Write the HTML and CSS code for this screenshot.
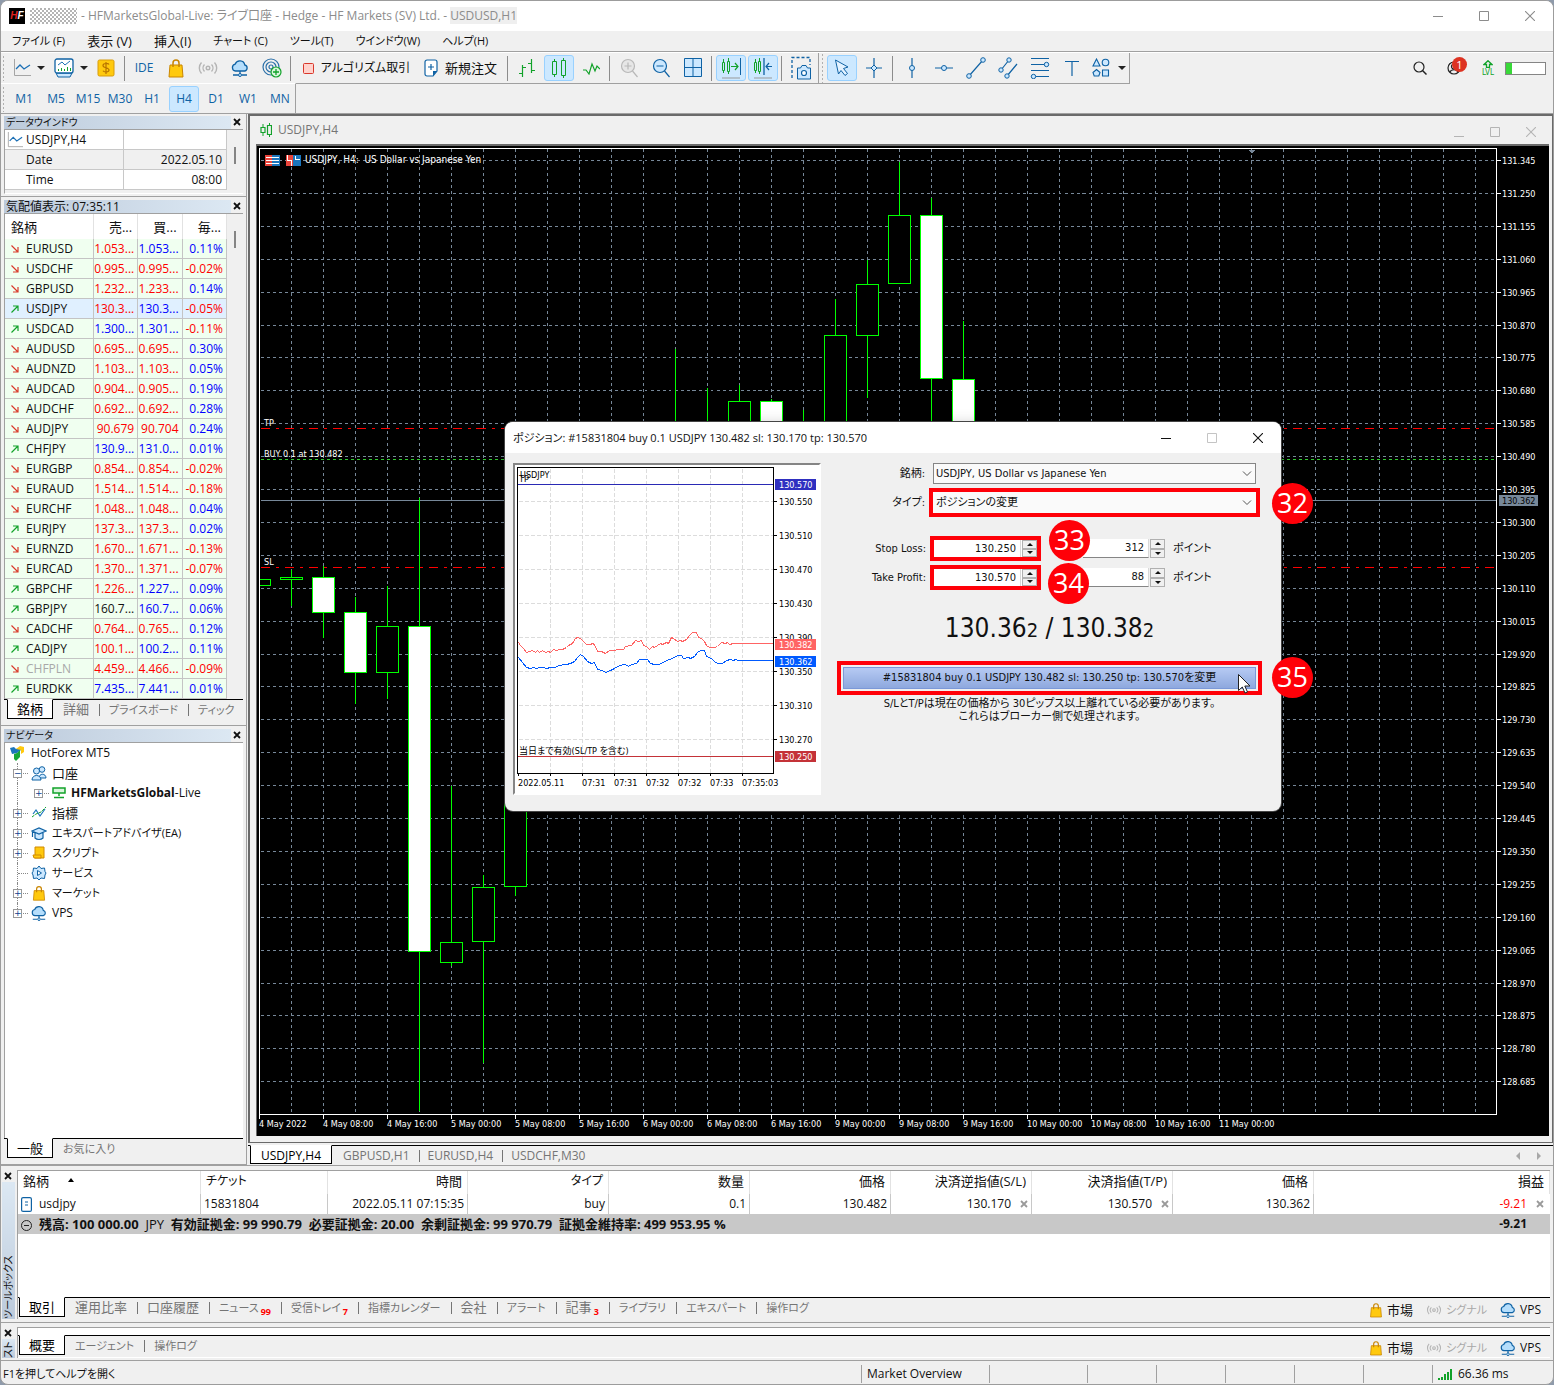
FILE: index.html
```html
<!DOCTYPE html>
<html lang="ja">
<head>
<meta charset="utf-8">
<title>HFMarketsGlobal-Live: ライブ口座 - Hedge</title>
<link rel="stylesheet" href="styles.css">
</head>
<body>
<svg class="defs" aria-hidden="true">
  <symbol id="i-bag" viewBox="0 0 18 20"><path d="M3 7h12l1 12H2z" fill="#ffc90e" stroke="#c98500"/><path d="M6 9V5a3 3 0 0 1 6 0v4" fill="none" stroke="#c98500" stroke-width="1.5"/></symbol>
  <symbol id="i-signal" viewBox="0 0 20 16"><g fill="none" stroke="#b4b4b4" stroke-width="1.4"><circle cx="10" cy="8" r="1.8"/><path d="M6.500 4.500a5 5 0 0 0 0 7M13.500 4.500a5 5 0 0 1 0 7M3.500 2.500a8 8 0 0 0 0 11M16.500 2.500a8 8 0 0 1 0 11"/></g></symbol>
  <symbol id="i-cloud" viewBox="0 0 18 18"><path d="M4.500 12a3.500 3.500 0 0 1-.3-6.900A5 5 0 0 1 13.800 6a3.100 3.100 0 0 1 0 6z" fill="#b5defc" stroke="#0f62a4" stroke-width="1.300"/><path d="M9 12v3M2 16h5M11 16h5" stroke="#0f62a4" stroke-width="1.300"/><circle cx="9" cy="16" r="1.500" fill="#cce8ff" stroke="#0f62a4"/></symbol>
  <symbol id="i-x" viewBox="0 0 8 8"><path d="M1 1l6 6M7 1L1 7" stroke="currentColor" stroke-width="1.800"/></symbol>
  <symbol id="i-dn" viewBox="0 0 8 8"><path d="M.5.500l6.500 6.500M7 2v5H2" fill="none" stroke="#d93a2b" stroke-width="1.200"/></symbol>
  <symbol id="i-up" viewBox="0 0 8 8"><path d="M.5 7.500L7 1M2 1h5v5" fill="none" stroke="#12a22a" stroke-width="1.200"/></symbol>
  <symbol id="i-line" viewBox="0 0 18 18"><path d="M1.500 0v16.500H18" fill="none" stroke="#a5a5a5"/><path d="M3 10l4-4 4 4 6-4" fill="none" stroke="#1b6fb5" stroke-width="1.300"/></symbol>
  <symbol id="i-caret" viewBox="0 0 8 4"><path d="M0 0h8L4 4z" fill="#222"/></symbol>
  <symbol id="i-min" viewBox="0 0 10 10"><path d="M0 5.500h10" stroke="currentColor"/></symbol>
  <symbol id="i-max" viewBox="0 0 10 10"><path d="M.5.500h9v9h-9z" fill="none" stroke="currentColor"/></symbol>
  <symbol id="i-close" viewBox="0 0 10 10"><path d="M0 0l10 10M10 0L0 10" stroke="currentColor" stroke-width="1.100"/></symbol>
</svg>
<div class="app">
  <header class="titlebar">
    <span class="logo"><span class="logo-h">H</span>F</span>
    <span class="masked"></span>
    <h1>- HFMarketsGlobal-Live: ライブ口座 - Hedge - HF Markets (SV) Ltd. - <span class="smudge">USDUSD,H1</span></h1>
    <div class="winbtns">
      <button aria-label="最小化"><svg width="10" height="10"><use href="#i-min"/></svg></button>
      <button aria-label="最大化"><svg width="10" height="10"><use href="#i-max"/></svg></button>
      <button aria-label="閉じる"><svg width="10" height="10"><use href="#i-close"/></svg></button>
    </div>
  </header>
  <nav class="menu">
    <button>ファイル (F)</button><button class="kanji">表示 (V)</button><button class="kanji">挿入(I)</button><button>チャート (C)</button><button>ツール(T)</button><button>ウインドウ(W)</button><button>ヘルプ(H)</button>
  </nav>
  <div class="bar-row">
    <div class="toolbar">
      <span class="grip"></span>
      <button class="wide drop" aria-label="チャート"><svg width="18" height="18"><use href="#i-line"/></svg><svg width="8" height="4"><use href="#i-caret"/></svg></button>
      <button class="wide drop" aria-label="インディケータ"><svg width="20" height="20" viewBox="0 0 20 20"><path d="M2 15h16l-2 4H4z" fill="#cce8ff" stroke="#0f62a4"/><rect x="1" y="1" width="18" height="14" rx="2" fill="#fff" stroke="#0f62a4" stroke-width="1.300"/><path d="M4 7l4-3 3 3 5-4" fill="none" stroke="#1b6fb5"/><path d="M4.500 13v-2M7.500 13v-3M10.500 13v-2M13.500 13V9M16.500 13v-3" stroke="#12a22a"/></svg><svg width="8" height="4"><use href="#i-caret"/></svg></button>
      <button aria-label="入出金"><svg width="18" height="18" viewBox="0 0 18 18"><rect x="1" y="1" width="16" height="16" rx="1.500" fill="#ffc90e" stroke="#d79b0b"/><path d="M12 5.500c-1-1.500-6-1.500-6 1 0 3 6 1.500 6 4.500 0 2.500-5 2.500-6 .8M9 3v12" fill="none" stroke="#b87400" stroke-width="1.200"/></svg></button>
      <span class="sep"></span>
      <button class="blue">IDE</button>
      <button aria-label="市場"><svg width="18" height="20"><use href="#i-bag"/></svg></button>
      <button aria-label="シグナル"><svg width="20" height="16"><use href="#i-signal"/></svg></button>
      <button aria-label="VPS"><svg width="18" height="18"><use href="#i-cloud"/></svg></button>
      <button aria-label="サービス"><svg width="20" height="20" viewBox="0 0 20 20"><g fill="none" stroke="#2a6fa8" stroke-width="1.200"><circle cx="9" cy="9" r="8"/><circle cx="9" cy="9" r="5"/><circle cx="9" cy="9" r="2"/></g><circle cx="14" cy="14" r="5" fill="#d9f5dc" stroke="#12a22a" stroke-width="1.200"/><path d="M11 14h6M14 11v6" stroke="#12a22a" stroke-width="1.300"/></svg></button>
      <span class="sep"></span>
      <button class="algo"><svg width="11" height="11" viewBox="0 0 11 11"><rect x=".5" y=".5" width="10" height="10" rx="1" fill="#ffd2cc" stroke="#d9372b"/></svg>アルゴリズム取引</button>
      <button class="order"><svg width="14" height="18" viewBox="0 0 14 18"><path d="M1 3a2 2 0 0 1 2-2h8a2 2 0 0 1 2 2v9l-4 5H3a2 2 0 0 1-2-2z" fill="#fff" stroke="#0f62a4" stroke-width="1.200"/><path d="M13 12H9v5z" fill="#0f62a4"/><path d="M4 8h6M7 5v6" stroke="#0f62a4" stroke-width="1.200"/></svg><span class="kanji">新規注文</span></button>
      <span class="sep"></span>
      <button aria-label="バー"><svg width="18" height="18" viewBox="0 0 18 18"><path d="M4.500 6v12M1 14.500h3M5 8.500h3M13.500 0v14M10 4.500h3M14 11.500h3" stroke="#12a22a" stroke-width="1.200"/></svg></button>
      <button class="on" aria-label="ローソク足"><svg width="16" height="20" viewBox="0 0 16 20"><path d="M3.500 1v18M12.500 0v20" stroke="#12a22a"/><path d="M1.500 3.500h4v13h-4zM10.500 2.500h4v15h-4z" fill="#cce8ff" stroke="#12a22a"/></svg></button>
      <button aria-label="ライン"><svg width="18" height="14" viewBox="0 0 18 14"><path d="M1 9h3l3 4 3-10 3 7 2-5 3 3" fill="none" stroke="#12a22a" stroke-width="1.200"/></svg></button>
      <span class="sep"></span>
      <button aria-label="ズームイン"><svg width="18" height="20" viewBox="0 0 18 20"><circle cx="8" cy="8" r="6.500" fill="#e6e6e6" stroke="#b8b8b8" stroke-width="1.200"/><path d="M4.500 8h7M8 4.500v7M12.500 13l5 6" stroke="#b8b8b8" stroke-width="1.200"/></svg></button>
      <button aria-label="ズームアウト"><svg width="18" height="20" viewBox="0 0 18 20"><circle cx="8" cy="8" r="6.500" fill="#cce8ff" stroke="#0f62a4" stroke-width="1.200"/><path d="M4.500 8h7M12.500 13l5 6" stroke="#0f62a4" stroke-width="1.200"/></svg></button>
      <button aria-label="整列"><svg width="18" height="20" viewBox="0 0 18 20"><path d="M.5.500h17v18H.5zM9 .5v18M.5 9.500h17" fill="#cce8ff" stroke="#0f62a4"/></svg></button>
      <span class="sep"></span>
      <button class="on" aria-label="自動スクロール"><svg width="20" height="22" viewBox="0 0 20 22"><path d="M2.500 2v14M7.500 1v16" stroke="#12a22a"/><path d="M1.500 5.500h2v8h-2zM6.500 4.500h2v10h-2z" fill="#cce8ff" stroke="#12a22a"/><path d="M10 9.500h7M14 6l3 3.500-3 3.500" fill="none" stroke="#12a22a" stroke-width="1.200"/><path d="M19.500 1v17" stroke="#0f62a4"/><path d="M1 21h18" stroke="#999"/></svg></button>
      <button class="on" aria-label="チャートシフト"><svg width="20" height="22" viewBox="0 0 20 22"><path d="M2.500 2v14M6.500 1v16" stroke="#12a22a"/><path d="M1.500 5.500h2v8h-2zM5.500 4.500h2v10h-2z" fill="#cce8ff" stroke="#12a22a"/><path d="M11 1v17" stroke="#0f62a4" stroke-width="1.300"/><path d="M19 9.500h-6M16 6l-3 3.500 3 3.500" fill="none" stroke="#0f62a4" stroke-width="1.200"/><path d="M1 21h18" stroke="#999"/></svg></button>
      <span class="sep"></span>
      <button aria-label="スクリーンショット"><svg width="20" height="24" viewBox="0 0 20 24"><path d="M1 22V1.500h18V9" fill="none" stroke="#0f62a4" stroke-width="1.300" stroke-dasharray="3 2"/><path d="M6.500 12h3l1.500-2.500h4l1.500 2.500h3v11h-13z" fill="#cce8ff" stroke="#0f62a4"/><circle cx="13" cy="17" r="2.500" fill="#fff" stroke="#0f62a4" stroke-width="1.200"/></svg></button>
      <span class="grip edge"></span>
      <button class="on" aria-label="カーソル"><svg width="16" height="18" viewBox="0 0 16 18"><path d="M1.500 1l12.500 7-4.500 1.500 4 5-2.500 2-4-5L4.500 15z" fill="#e3f2ff" stroke="#0f62a4"/></svg></button>
      <button aria-label="十字カーソル"><svg width="18" height="22" viewBox="0 0 18 22"><path d="M9 1v20M1 11h16" stroke="#0f62a4" stroke-width="1.200"/><path d="M9 8l3 3-3 3-3-3z" fill="#cce8ff" stroke="#0f62a4"/></svg></button>
      <span class="sep"></span>
      <button aria-label="垂直線"><svg width="8" height="22" viewBox="0 0 8 22"><path d="M4 1v20" stroke="#0f62a4" stroke-width="1.200"/><circle cx="4" cy="11" r="2.500" fill="#cce8ff" stroke="#0f62a4"/></svg></button>
      <button aria-label="水平線"><svg width="18" height="8" viewBox="0 0 18 8"><path d="M0 4h18" stroke="#0f62a4" stroke-width="1.200"/><circle cx="9" cy="4" r="2.500" fill="#cce8ff" stroke="#0f62a4"/></svg></button>
      <button aria-label="トレンドライン"><svg width="20" height="22" viewBox="0 0 20 22"><path d="M3 19L17 3" stroke="#0f62a4" stroke-width="1.200"/><circle cx="3" cy="19" r="2.300" fill="#cce8ff" stroke="#0f62a4"/><circle cx="17" cy="3" r="2.300" fill="#cce8ff" stroke="#0f62a4"/></svg></button>
      <button aria-label="チャネル"><svg width="20" height="22" viewBox="0 0 20 22"><path d="M3 13l8-10M9 19L19 7" stroke="#0f62a4" stroke-width="1.200"/><g fill="#cce8ff" stroke="#0f62a4"><circle cx="3" cy="13" r="2.200"/><circle cx="11" cy="3" r="2.200"/><circle cx="9" cy="19" r="2.200"/></g></svg></button>
      <button aria-label="フィボナッチ"><svg width="20" height="22" viewBox="0 0 20 22"><path d="M1 1.500h18M1 7.500h18M1 13.500h18M1 19.500h18" stroke="#0f62a4" stroke-width="1.200"/><g fill="#cce8ff" stroke="#0f62a4"><circle cx="16.500" cy="7.500" r="2.200"/><circle cx="3.500" cy="19.500" r="2.200"/></g></svg></button>
      <button aria-label="テキスト"><svg width="14" height="16" viewBox="0 0 14 16"><path d="M0 1.500h14M7 1v15" stroke="#0f62a4" stroke-width="1.200"/></svg></button>
      <button class="wide" aria-label="オブジェクト"><svg width="18" height="20" viewBox="0 0 18 20"><g fill="#cce8ff" stroke="#0f62a4" stroke-width="1.100"><path d="M4.500 1l3.500 7H1z"/><circle cx="13.500" cy="4.500" r="3.300"/><path d="M4.500 11.500L8 14.500 6.800 18H2.200L1 14.500z"/><path d="M10.500 12h6v6h-6z"/></g></svg><svg width="8" height="4"><use href="#i-caret"/></svg></button>
    </div>
    <div class="tray">
      <button aria-label="検索"><svg width="14" height="14" viewBox="0 0 14 14"><circle cx="6" cy="6" r="5" fill="none" stroke="#222" stroke-width="1.200"/><path d="M9.500 9.500l4 4" stroke="#222" stroke-width="1.500"/></svg></button>
      <button class="user" aria-label="通知"><svg width="14" height="14" viewBox="0 0 14 14"><g fill="none" stroke="#222" stroke-width="1.200"><circle cx="7" cy="7" r="6"/><circle cx="7" cy="5.500" r="2.500"/><path d="M3 11c1-3 7-3 8 0"/></g></svg><span class="count">1</span></button>
      <span class="lvl"><svg width="10" height="8" viewBox="0 0 10 8"><path d="M5 .7L9 4.500H6.500v3h-3v-3H1z" fill="none" stroke="#12a22a" stroke-width="1.300"/></svg>LVL</span>
      <span class="meter"></span>
    </div>
  </div>
  <div class="frames">
    <span class="grip"></span>
    <button>M1</button><button>M5</button><button>M15</button><button>M30</button><button>H1</button><button class="on">H4</button><button>D1</button><button>W1</button><button>MN</button>
  </div>

  <main class="main">
    <aside class="side">
      <section class="panel">
        <div class="cap"><h2 class="kana">データウインドウ</h2><button aria-label="閉じる"><svg width="8" height="8"><use href="#i-x"/></svg></button></div>
        <div class="scrollbox data">
          <table class="dw">
            <tr><td><svg width="16" height="16"><use href="#i-line"/></svg>USDJPY,H4</td><td></td></tr>
            <tr class="alt"><td>Date</td><td>2022.05.10</td></tr>
            <tr><td>Time</td><td>08:00</td></tr>
          </table>
          <span class="thumb"></span>
        </div>
      </section>
      <section class="panel market">
        <div class="cap"><h2>気配値表示: 07:35:11</h2><button aria-label="閉じる"><svg width="8" height="8"><use href="#i-x"/></svg></button></div>
        <div class="scrollbox">
          <table class="mw">
            <thead><tr><th>銘柄</th><th>売...</th><th>買...</th><th>毎...</th></tr></thead>
            <tbody>
            <tr><td><svg><use href="#i-dn"/></svg>EURUSD</td><td class="r">1.053...</td><td class="b">1.053...</td><td class="b">0.11%</td></tr>
            <tr><td><svg><use href="#i-dn"/></svg>USDCHF</td><td class="r">0.995...</td><td class="r">0.995...</td><td class="r">-0.02%</td></tr>
            <tr><td><svg><use href="#i-dn"/></svg>GBPUSD</td><td class="r">1.232...</td><td class="r">1.233...</td><td class="b">0.14%</td></tr>
            <tr class="sel"><td><svg><use href="#i-up"/></svg>USDJPY</td><td class="r">130.3...</td><td class="b">130.3...</td><td class="r">-0.05%</td></tr>
            <tr><td><svg><use href="#i-up"/></svg>USDCAD</td><td class="b">1.300...</td><td class="b">1.301...</td><td class="r">-0.11%</td></tr>
            <tr><td><svg><use href="#i-dn"/></svg>AUDUSD</td><td class="r">0.695...</td><td class="r">0.695...</td><td class="b">0.30%</td></tr>
            <tr><td><svg><use href="#i-dn"/></svg>AUDNZD</td><td class="r">1.103...</td><td class="r">1.103...</td><td class="b">0.05%</td></tr>
            <tr><td><svg><use href="#i-dn"/></svg>AUDCAD</td><td class="r">0.904...</td><td class="r">0.905...</td><td class="b">0.19%</td></tr>
            <tr><td><svg><use href="#i-dn"/></svg>AUDCHF</td><td class="r">0.692...</td><td class="r">0.692...</td><td class="b">0.28%</td></tr>
            <tr><td><svg><use href="#i-dn"/></svg>AUDJPY</td><td class="r">90.679</td><td class="r">90.704</td><td class="b">0.24%</td></tr>
            <tr><td><svg><use href="#i-up"/></svg>CHFJPY</td><td class="b">130.9...</td><td class="b">131.0...</td><td class="b">0.01%</td></tr>
            <tr><td><svg><use href="#i-dn"/></svg>EURGBP</td><td class="r">0.854...</td><td class="r">0.854...</td><td class="r">-0.02%</td></tr>
            <tr><td><svg><use href="#i-dn"/></svg>EURAUD</td><td class="r">1.514...</td><td class="r">1.514...</td><td class="r">-0.18%</td></tr>
            <tr><td><svg><use href="#i-dn"/></svg>EURCHF</td><td class="r">1.048...</td><td class="r">1.048...</td><td class="b">0.04%</td></tr>
            <tr><td><svg><use href="#i-up"/></svg>EURJPY</td><td class="r">137.3...</td><td class="r">137.3...</td><td class="b">0.02%</td></tr>
            <tr><td><svg><use href="#i-dn"/></svg>EURNZD</td><td class="r">1.670...</td><td class="r">1.671...</td><td class="r">-0.13%</td></tr>
            <tr><td><svg><use href="#i-dn"/></svg>EURCAD</td><td class="r">1.370...</td><td class="r">1.371...</td><td class="r">-0.07%</td></tr>
            <tr><td><svg><use href="#i-up"/></svg>GBPCHF</td><td class="r">1.226...</td><td class="b">1.227...</td><td class="b">0.09%</td></tr>
            <tr><td><svg><use href="#i-up"/></svg>GBPJPY</td><td>160.7...</td><td class="b">160.7...</td><td class="b">0.06%</td></tr>
            <tr><td><svg><use href="#i-dn"/></svg>CADCHF</td><td class="r">0.764...</td><td class="r">0.765...</td><td class="b">0.12%</td></tr>
            <tr><td><svg><use href="#i-up"/></svg>CADJPY</td><td class="r">100.1...</td><td class="b">100.2...</td><td class="b">0.11%</td></tr>
            <tr><td class="off"><svg><use href="#i-dn"/></svg>CHFPLN</td><td class="r">4.459...</td><td class="r">4.466...</td><td class="r">-0.09%</td></tr>
            <tr><td><svg><use href="#i-up"/></svg>EURDKK</td><td class="b">7.435...</td><td class="b">7.441...</td><td class="b">0.01%</td></tr>
            </tbody>
          </table>
          <span class="thumb"></span>
        </div>
        <div class="tabs"><button class="cur kanji">銘柄</button><button class="kanji">詳細</button><button>プライスボード</button><button>ティック</button></div>
      </section>
      <section class="panel nav">
        <div class="cap"><h2 class="kana">ナビゲータ</h2><button aria-label="閉じる"><svg width="8" height="8"><use href="#i-x"/></svg></button></div>
        <ul class="tree">
          <li class="root"><svg width="16" height="16" viewBox="0 0 16 16"><path d="M1 3l4-1 2 2 5-2v3L8 8 3 9z" fill="#1b75bc"/><path d="M7 4l4-3 4 1v5l-3 2V5z" fill="#ffc90e"/><path d="M5 9l3-1 3-3v7l-4 4-2-2z" fill="#16a637"/></svg>HotForex MT5</li>
          <li class="lv1 open"><i class="ex">−</i><svg width="16" height="16" viewBox="0 0 16 16"><g fill="#cce8ff" stroke="#0f62a4"><circle cx="11" cy="4.500" r="2.800"/><path d="M8 13c0-5 7-5 7 0z"/><circle cx="5.500" cy="6" r="3"/><path d="M1 15c0-6 9-6 9 0z"/></g></svg><span class="kanji">口座</span></li>
          <li class="lv2"><i class="ex">+</i><svg width="14" height="12" viewBox="0 0 14 12"><path d="M1 1h12v5H1z" fill="#d9f5dc" stroke="#12a22a" stroke-width="1.500"/><path d="M7 6v3M2 10.500h10" stroke="#12a22a" stroke-width="1.500"/></svg><span><b>HFMarketsGlobal</b>-Live</span></li>
          <li class="lv1"><i class="ex">+</i><svg width="16" height="16" viewBox="0 0 16 16"><path d="M2 9l3-4 4 6 5-7" fill="none" stroke="#1b75bc" stroke-width="1.200"/><path d="M1 12l4-3 5-2 5-5" fill="none" stroke="#12a22a" stroke-dasharray="3 1"/></svg><span class="kanji">指標</span></li>
          <li class="lv1 kt"><i class="ex">+</i><svg width="16" height="16" viewBox="0 0 16 16"><path d="M4 8v5c2 2 6 2 8 0V8M1 6l7-3 7 3-7 3zM1.500 6v6" fill="#cce8ff" stroke="#0f62a4" stroke-width="1.200"/></svg>エキスパートアドバイザ(EA)</li>
          <li class="lv1 kt"><i class="ex">+</i><svg width="16" height="16" viewBox="0 0 16 16"><path d="M4 2h9v11H4z" fill="#ffc90e" stroke="#d18a00"/><path d="M2 10h8v3H3z" fill="#ffc90e" stroke="#d18a00"/></svg>スクリプト</li>
          <li class="lv1 kt"><i class="ex none"></i><svg width="16" height="16" viewBox="0 0 16 16"><path d="M8 1l2 2.500 3.500-.5.5 3.500L15 8l-1 2-.5 3.500-3.500-.5-2 2-2-2-3.500.5L2 10 1 8l1-1.500L2.500 3l3.500.5z" fill="#cce8ff" stroke="#0f62a4"/><path d="M6.500 5.500v5L10.500 8z" fill="#fff" stroke="#0f62a4"/></svg>サービス</li>
          <li class="lv1 kt"><i class="ex">+</i><svg width="16" height="16"><use href="#i-bag"/></svg>マーケット</li>
          <li class="lv1"><i class="ex">+</i><svg width="16" height="16"><use href="#i-cloud"/></svg>VPS</li>
        </ul>
        <div class="tabs"><button class="cur kanji">一般</button><button>お気に入り</button></div>
      </section>
    </aside>

    <section class="work">
      <div class="mdi">
        <div class="mdi-cap">
          <svg width="12" height="14" viewBox="0 0 12 14"><path d="M3 1v12M9.500 0v14" stroke="#12a22a"/><path d="M1 4.500h4v5H1zM7.500 2.500h4v9h-4z" fill="#efefef" stroke="#12a22a" stroke-width="1.200"/></svg>
          <h2>USDJPY,H4</h2>
          <div class="mdi-btns">
            <button aria-label="最小化"><svg width="10" height="10" viewBox="0 0 10 10"><path d="M0 9.500h10" stroke="currentColor"/></svg></button>
            <button aria-label="最大化"><svg width="10" height="10"><use href="#i-max"/></svg></button>
            <button aria-label="閉じる"><svg width="10" height="10"><use href="#i-close"/></svg></button>
          </div>
        </div>
        <div class="chart">
          <svg class="plot" role="img" aria-label="USDJPY H4">
            <defs><pattern id="vg" x="31" y="0" width="32" height="6" patternUnits="userSpaceOnUse"><rect width="1" height="3" fill="#778899"/></pattern></defs>
            <rect width="100%" height="100%" fill="url(#vg)"/>
            <g transform="translate(.5 .5)" fill="none">
              <path stroke="#778899" stroke-dasharray="3 3" d="M0 11h3000M0 44h3000M0 77h3000M0 110h3000M0 143h3000M0 176h3000M0 208h3000M0 241h3000M0 274h3000M0 307h3000M0 340h3000M0 373h3000M0 406h3000M0 439h3000M0 472h3000M0 505h3000M0 537h3000M0 570h3000M0 603h3000M0 636h3000M0 669h3000M0 702h3000M0 735h3000M0 768h3000M0 801h3000M0 834h3000M0 866h3000M0 899h3000M0 932h3000"/>
              <path stroke="#778899" d="M0 351h3000"/>
              <path stroke="#f00" stroke-dasharray="9 6 3 6" d="M0 279h3000M0 418h3000"/>
              <path stroke="#32cd32" stroke-dasharray="3 3" d="M0 310h3000"/>
              <path stroke="#0f0" d="M31 420v36M63 416v72M95 447v107M127 436v113M159 348v613M191 636v180M223 725v188M255 560v186M415 199v200M447 238v160M479 235v160M511 249v150M543 260v140M575 149v250M607 110v138M639 12v122M671 48v350M703 171v230"/>
              <g stroke="#0f0" fill="#000">
                <path d="M-13 430h23v6h-23zM20 428h22v2h-22zM116 477h22v46h-22zM180 793h22v20h-22zM212 738h22v54h-22zM244 584h22v153h-22zM468 252h22v140h-22zM564 186h22v200h-22zM596 135h22v51h-22zM628 66h22v68h-22z"/>
                <path fill="#fff" d="M52 428h22v35h-22zM84 463h22v60h-22zM148 477h22v325h-22zM500 252h22v140h-22zM660 66h22v163h-22zM692 230h22v160h-22z"/>
              </g>
              <path d="M987 0h9l-4.500 4z" fill="#778899"/>
              <g stroke="none"><path d="M4 5h7v11H4z" fill="#e9443b"/><path d="M11 5h8v11h-8z" fill="#1b75bc"/><path d="M5 7.500h13M5 10.500h13M5 13.500h13" stroke="#fff"/><path d="M25 5h7v11h-7z" fill="#e9443b"/><path d="M32 5h8v11h-8z" fill="#1b75bc"/><path d="M27 5v6h4v5M35 6v4h4" stroke="#fff"/></g>
            </g>
            <g class="ctext"><text class="name" x="45" y="14">USDJPY, H4:&#160; US Dollar vs Japanese Yen</text><text x="4" y="277">TP</text><text x="4" y="308">BUY 0.1 at 130.482</text><text x="4" y="416">SL</text></g>
          </svg>
          <svg class="price ctext">
            <path fill="none" stroke="#fff" d="M0 11.500h4M0 44.500h4M0 77.500h4M0 110.500h4M0 143.500h4M0 176.500h4M0 208.500h4M0 241.500h4M0 274.500h4M0 307.500h4M0 340.500h4M0 373.500h4M0 406.500h4M0 439.500h4M0 472.500h4M0 505.500h4M0 537.500h4M0 570.500h4M0 603.500h4M0 636.500h4M0 669.500h4M0 702.500h4M0 735.500h4M0 768.500h4M0 801.500h4M0 834.500h4M0 866.500h4M0 899.500h4M0 932.500h4"/>
            <text x="5" y="15">131.345</text><text x="5" y="48">131.250</text><text x="5" y="81">131.155</text><text x="5" y="114">131.060</text><text x="5" y="147">130.965</text><text x="5" y="180">130.870</text><text x="5" y="212">130.775</text><text x="5" y="245">130.680</text><text x="5" y="278">130.585</text><text x="5" y="311">130.490</text><text x="5" y="344">130.395</text><text x="5" y="377">130.300</text><text x="5" y="410">130.205</text><text x="5" y="443">130.110</text><text x="5" y="476">130.015</text><text x="5" y="509">129.920</text><text x="5" y="541">129.825</text><text x="5" y="574">129.730</text><text x="5" y="607">129.635</text><text x="5" y="640">129.540</text><text x="5" y="673">129.445</text><text x="5" y="706">129.350</text><text x="5" y="739">129.255</text><text x="5" y="772">129.160</text><text x="5" y="805">129.065</text><text x="5" y="838">128.970</text><text x="5" y="870">128.875</text><text x="5" y="903">128.780</text><text x="5" y="936">128.685</text>
            <rect x="2" y="346" width="39" height="11" fill="#778899"/><text class="dark" x="5" y="355">130.362</text>
          </svg>
          <svg class="time ctext">
            <path fill="none" stroke="#fff" d="M.5 0v4M64.500 0v4M128.500 0v4M192.500 0v4M256.500 0v4M320.500 0v4M384.500 0v4M448.500 0v4M512.500 0v4M576.500 0v4M640.500 0v4M704.500 0v4M768.500 0v4M832.500 0v4M896.500 0v4M960.500 0v4"/>
            <text x="0" y="12">4 May 2022</text><text x="64" y="12">4 May 08:00</text><text x="128" y="12">4 May 16:00</text><text x="192" y="12">5 May 00:00</text><text x="256" y="12">5 May 08:00</text><text x="320" y="12">5 May 16:00</text><text x="384" y="12">6 May 00:00</text><text x="448" y="12">6 May 08:00</text><text x="512" y="12">6 May 16:00</text><text x="576" y="12">9 May 00:00</text><text x="640" y="12">9 May 08:00</text><text x="704" y="12">9 May 16:00</text><text x="768" y="12">10 May 00:00</text><text x="832" y="12">10 May 08:00</text><text x="896" y="12">10 May 16:00</text><text x="960" y="12">11 May 00:00</text>
          </svg>
        </div>
      </div>
      <div class="tabs charts"><button class="cur">USDJPY,H4</button><button>GBPUSD,H1</button><button>EURUSD,H4</button><button>USDCHF,M30</button><span class="arrows"><svg width="4" height="8" viewBox="0 0 4 8"><path d="M4 0v8L0 4z" fill="#a8a8a8"/></svg><svg width="4" height="8" viewBox="0 0 4 8"><path d="M0 0v8l4-4z" fill="#a8a8a8"/></svg></span></div>
    </section>
  </main>

  <section class="dock">
    <div class="spine"><button aria-label="閉じる"><svg width="8" height="8"><use href="#i-x"/></svg></button><h2>ツールボックス</h2></div>
    <div class="dock-body">
      <table class="trades">
        <colgroup><col class="c1"><col class="c2"><col class="c3"><col class="c4"><col class="c4"><col class="c4"><col class="c4"><col class="c4"><col class="c4"><col></colgroup>
        <thead><tr><th>銘柄<svg class="sort" width="6" height="4" viewBox="0 0 6 4"><path d="M0 4h6L3 0z"/></svg></th><th class="kt">チケット</th><th>時間</th><th class="kt">タイプ</th><th>数量</th><th>価格</th><th>決済逆指値(S/L)</th><th>決済指値(T/P)</th><th>価格</th><th>損益</th></tr></thead>
        <tbody>
        <tr><td><svg class="doc" width="11" height="15" viewBox="0 0 11 15"><rect x=".6" y=".6" width="9.800" height="13.800" rx="1.500" fill="#fff" stroke="#0f62a4" stroke-width="1.200"/><path d="M4 5h3M4 8h3" stroke="#0f62a4"/></svg>usdjpy</td><td>15831804</td><td>2022.05.11 07:15:35</td><td>buy</td><td>0.1</td><td>130.482</td><td>130.170<button aria-label="S/Lを削除"><svg width="8" height="8"><use href="#i-x"/></svg></button></td><td>130.570<button aria-label="T/Pを削除"><svg width="8" height="8"><use href="#i-x"/></svg></button></td><td>130.362</td><td class="loss">-9.21<button aria-label="決済"><svg width="8" height="8"><use href="#i-x"/></svg></button></td></tr>
        <tr class="sum"><td colspan="9"><svg class="doc" width="11" height="11" viewBox="0 0 11 11"><circle cx="5.500" cy="5.500" r="5" fill="none" stroke="#222"/><path d="M3 5.500h5" stroke="#222"/></svg><b>残高: 100 000.00</b>&#160; JPY&#160; <b>有効証拠金: 99 990.79&#160; 必要証拠金: 20.00&#160; 余剰証拠金: 99 970.79&#160; 証拠金維持率: 499 953.95 %</b></td><td><b>-9.21</b></td></tr>
        </tbody>
      </table>
      <div class="tabs low"><button class="cur kanji">取引</button><button class="kanji">運用比率</button><button class="kanji">口座履歴</button><button>ニュース<sub>99</sub></button><button>受信トレイ<sub>7</sub></button><button>指標カレンダー</button><button class="kanji">会社</button><button>アラート</button><button class="kanji">記事<sub>3</sub></button><button>ライブラリ</button><button>エキスパート</button><button>操作ログ</button>
        <div class="links"><button><svg width="14" height="16"><use href="#i-bag"/></svg><span class="kanji">市場</span></button><button class="dim"><svg width="16" height="12"><use href="#i-signal"/></svg>シグナル</button><button class="lat"><svg width="16" height="16"><use href="#i-cloud"/></svg>VPS</button></div>
      </div>
    </div>
  </section>
  <section class="dock tester">
    <div class="spine"><button aria-label="閉じる"><svg width="8" height="8"><use href="#i-x"/></svg></button><h2>スト</h2></div>
    <div class="dock-body">
      <div class="tabs low"><button class="cur kanji">概要</button><button>エージェント</button><button>操作ログ</button>
        <div class="links"><button><svg width="14" height="16"><use href="#i-bag"/></svg><span class="kanji">市場</span></button><button class="dim"><svg width="16" height="12"><use href="#i-signal"/></svg>シグナル</button><button class="lat"><svg width="16" height="16"><use href="#i-cloud"/></svg>VPS</button></div>
      </div>
    </div>
  </section>
  <footer class="status">
    <span class="hint">F1を押してヘルプを開く</span><span class="s1">Market Overview</span><span class="s2"></span><span class="s3"></span><span class="s3"></span><span class="s3"></span><span class="s3"></span><span class="s3"></span><span class="ping"><svg width="14" height="12" viewBox="0 0 14 12"><path d="M1 12v-2M4 12V9M7 12V6M10 12V4M13 12V1" stroke="#12a22a" stroke-width="2"/></svg>66.36 ms</span>
  </footer>

  <div class="dialog" role="dialog" aria-labelledby="dt">
    <div class="dlg-cap">
      <h2 id="dt">ポジション: #15831804 buy 0.1 USDJPY 130.482 sl: 130.170 tp: 130.570</h2>
      <div class="winbtns">
        <button aria-label="最小化"><svg width="10" height="10"><use href="#i-min"/></svg></button>
        <button aria-label="最大化" disabled><svg width="10" height="10"><use href="#i-max"/></svg></button>
        <button aria-label="閉じる"><svg width="10" height="10"><use href="#i-close"/></svg></button>
      </div>
    </div>
    <div class="dlg-body">
      <svg class="tick" viewBox="0 0 304 328" role="img" aria-label="USDJPY ティック">
        <g transform="translate(.5 .5)" fill="none">
          <path stroke="#dcdcdc" stroke-dasharray="4 2" d="M3 36h255M3 70h255M3 104h255M3 138h255M3 172h255M3 206h255M3 240h255M3 274h255M35 3v305M67 3v305M99 3v305M131 3v305M163 3v305M195 3v305M227 3v305"/>
          <path stroke="#2a2ab5" d="M2 19h256"/><path stroke="#c43238" d="M2 291h256"/>
          <path stroke="#ff6464" d="M3 177l2 3 3 3 3 4 6-2 3 2 2-2 2 2 3-2 3 2 3-1 2 1 3-3 3 1 3-1 3 0 4-2 2-2 4-2 3-5 2-1 3 1 6 6 4 0 2-1 2 1 3 7 4 0 4 2 4-3 3 0 8-1 3 0 2-3 6-1 4-5 3 1 3-1 2 5 3 1 3 3 3-3 2 1 3-2 3-2 2 1 4-2 2 1 3-6 2 1 4 3 3-1 2 1 4-2 3-4 3-3 4 0 2 5 3 1 3 3 2 4 3 2 5 0 3-1 4-4 4 1 2-1 2 2 4-1H258"/>
          <path stroke="#005aff" d="M3 192l4 5 4 5 4 1 3-1 3 1 3-1h4l3 1 4-1 5 0 3-2 8-1 4-1 4-2 3-4 3-3 3 2 4 5 4 2 3-1 3 7 5 1 3 2 5-2 4-2 5-3 6-1 3 2 3-2 5-1 3-4 8 0 3 4 4 1 4 0 5-2 3-2 6-2 5-3 4 0 2 3 5-1 2 1 4-2 3-4 3-2h4l2 6 5 2 3 3 3 2h5l4-3 4-1 3 1 2-1 3 1H258"/>
          <path stroke="#000" d="M2 2h256v306H2zM258 36h3M258 70h3M258 104h3M258 138h3M258 172h3M258 206h3M258 240h3M258 274h3M3 308v2M35 308v2M67 308v2M99 308v2M131 308v2M163 308v2M195 308v2M227 308v2"/>
        </g>
        <g>
          <text x="5" y="13">USDJPY</text><text x="4" y="17">TP</text><text x="4" y="289">当日まで有効(SL/TP を含む)</text>
          <text x="264" y="40">130.550</text><text x="264" y="74">130.510</text><text x="264" y="108">130.470</text><text x="264" y="142">130.430</text><text x="264" y="176">130.390</text><text x="264" y="210">130.350</text><text x="264" y="244">130.310</text><text x="264" y="278">130.270</text>
          <text x="3" y="321">2022.05.11</text><text x="67" y="321">07:31</text><text x="99" y="321">07:31</text><text x="131" y="321">07:32</text><text x="163" y="321">07:32</text><text x="195" y="321">07:33</text><text x="227" y="321">07:35:03</text>
        </g>
        <path d="M260 14h41v11h-41z" fill="#2f2fc0"/><path d="M260 174h41v11h-41z" fill="#ff6464"/><path d="M260 191h41v11h-41z" fill="#005aff"/><path d="M260 286h41v11h-41z" fill="#c43238"/>
        <g class="tag"><text x="264" y="23">130.570</text><text x="264" y="183">130.382</text><text x="264" y="200">130.362</text><text x="264" y="295">130.250</text></g>
      </svg>
      <form class="form">
        <div class="frow"><label for="sym">銘柄:</label><div class="pick"><select id="sym"><option>USDJPY, US Dollar vs Japanese Yen</option></select><svg width="10" height="6" viewBox="0 0 10 6"><path d="M1 .5l4 4 4-4" fill="none" stroke="#555"/></svg></div></div>
        <div class="frow"><label for="typ">タイプ:</label><div class="pick mark"><select id="typ"><option>ポジションの変更</option></select><svg width="10" height="6" viewBox="0 0 10 6"><path d="M1 .5l4 4 4-4" fill="none" stroke="#555"/></svg></div></div>
        <div class="frow spins"><label for="sl">Stop Loss:</label><div class="spin mark"><input id="sl" value="130.250"><span class="ud"><button type="button" aria-label="増"></button><button type="button" aria-label="減"></button></span></div><div class="spin pts"><input aria-label="SL ポイント" value="312"><span class="ud"><button type="button" aria-label="増"></button><button type="button" aria-label="減"></button></span></div><span>ポイント</span></div>
        <div class="frow spins"><label for="tp">Take Profit:</label><div class="spin mark"><input id="tp" value="130.570"><span class="ud"><button type="button" aria-label="増"></button><button type="button" aria-label="減"></button></span></div><div class="spin pts"><input aria-label="TP ポイント" value="88"><span class="ud"><button type="button" aria-label="増"></button><button type="button" aria-label="減"></button></span></div><span>ポイント</span></div>
        <p class="quote">130.36<small>2</small> / 130.38<small>2</small></p>
        <button type="button" class="modify">#15831804 buy 0.1 USDJPY 130.482 sl: 130.250 tp: 130.570を変更</button>
        <p class="note">S/LとT/Pは現在の価格から 30ピップス以上離れている必要があります。<br>これらはブローカー側で処理されます。</p>
      </form>
    </div>
    <span class="badge n32">32</span><span class="badge n33">33</span><span class="badge n34">34</span><span class="badge n35">35</span>
    <svg class="pointer" width="14" height="22" viewBox="0 0 14 22"><path d="M1.500 1.500v16l3.800-3.500 2.700 6 2.500-1-2.700-6H13z" fill="#fff" stroke="#222"/></svg>
  </div>
</div>
</body>
</html>
```
FILE: styles.css
```css
* { box-sizing: border-box; }
body {
  margin: 0;
  background: #8f9bab;
  font: 12px/16px "Open Sans", "Noto Sans CJK JP", sans-serif;
  font-feature-settings: "palt";
  color: #111;
}
h1, h2, p, ul { margin: 0; padding: 0; font-size: inherit; font-weight: normal; }
button, input, select { font: inherit; font-feature-settings: inherit; color: inherit; }
button { margin: 0; padding: 0; border: 0; background: none; white-space: nowrap; }
svg { flex: none; }
.defs { position: absolute; width: 0; height: 0; }
.kanji { font-size: 13px; }
.kt { font-size: 11px; }

.app {
  position: relative;
  display: flex;
  flex-direction: column;
  min-height: 100vh;
  overflow: hidden;
  border: 1px solid #9c9c9c;
  border-radius: 8px;
  background: #f0f0f0;
}

/* title bar and menu */
.titlebar { display: flex; align-items: center; height: 30px; padding-left: 8px; background: #fff; color: #8c8c8c; }
.titlebar h1 { margin-left: 4px; white-space: nowrap; }
.logo { width: 16px; height: 16px; background: #000; color: #fff; font: italic bold 10px/16px "Liberation Sans", sans-serif; text-align: center; }
.logo-h { color: #e02020; }
.masked { width: 47px; height: 16px; margin-left: 5px; background: repeating-conic-gradient(#b4b4b4 0 25%, #fff 0 50%) 0 0 / 4px 4px; }
.smudge { background: #efefef; }
.winbtns { display: flex; margin-left: auto; }
.winbtns button { display: grid; place-items: center; width: 46px; height: 30px; }
.menu { display: flex; gap: 22px; height: 21px; padding-left: 11px; border-bottom: 1px solid #a0a0a0; font-size: 11px; line-height: 18px; }

/* toolbars */
.bar-row { display: flex; justify-content: space-between; height: 31px; border-top: 1px solid #fff; }
.toolbar, .frames { display: flex; align-items: center; gap: 2px; }
.toolbar { height: 31px; border-right: 1px solid #a0a0a0; border-bottom: 1px solid #a0a0a0; }
.toolbar button, .frames button { display: flex; align-items: center; justify-content: center; width: 30px; height: 26px; border: 1px solid transparent; border-radius: 3px; }
.toolbar .wide { width: 40px; gap: 8px; }
.toolbar .drop { gap: 6px; padding-left: 4px; }
.toolbar .algo { width: 120px; padding-left: 3px; gap: 7px; }
.toolbar .order { width: 87px; gap: 7px; }
.toolbar .on, .frames .on { border-color: #99d1ff; background: #cce8ff; }
.blue, .frames { color: #0f62a4; }
.sep { width: 4px; height: 25px; background: linear-gradient(#8c8c8c, #8c8c8c) 1px 0 / 1px 100% no-repeat; }
.grip { width: 4px; height: 26px; background: radial-gradient(#b0b0b0 0 1px, transparent 1px) 1px 0 / 3px 4px repeat-y; }
.grip.edge { width: 7px; height: 30px; border-left: 1px solid #a0a0a0; background-position: 2px 0; }
.frames { align-self: flex-start; height: 30px; border-top: 1px solid #fff; border-right: 1px solid #a0a0a0; }
.frames .grip { width: 6px; }
.tray { display: flex; align-items: center; padding-right: 7px; }
.tray button { display: grid; place-items: center; width: 34px; height: 26px; }
.tray .user { position: relative; }
.count { position: absolute; top: 2px; right: 4px; width: 15px; height: 15px; border-radius: 50%; background: #dd3322; color: #fff; font-size: 11px; line-height: 15px; }
.lvl { display: flex; flex-direction: column; align-items: center; gap: 1px; width: 34px; color: #12a22a; font: 8px/8px "DejaVu Sans Condensed", "Open Sans", sans-serif; }
.meter { width: 41px; height: 13px; border: 1px solid #858585; background: linear-gradient(90deg, #39d839 6px, #fff 6px); }

/* main split */
.main { flex: 1; display: flex; min-height: 0; border-top: 1px solid #a0a0a0; }
.side { display: flex; flex-direction: column; width: 246px; border-right: 1px solid #a0a0a0; }
.panel { padding: 1px 3px 2px; border-bottom: 1px solid #a0a0a0; }
.market { padding: 2px 3px 4px; }
.nav { flex: 1; display: flex; flex-direction: column; padding: 2px 3px 3px; }
.cap { display: flex; justify-content: space-between; align-items: center; height: 14px; }
.cap h2 { flex: 1; height: 13px; padding-left: 2px; background: linear-gradient(90deg, #bccadb, #dce8f3); font-size: 12px; line-height: 13px; }
.cap .kana { font-size: 10px; }
.cap button, .spine button { display: grid; place-items: center; width: 12px; height: 12px; }
.scrollbox { display: flex; justify-content: space-between; align-items: flex-start; border: 1px solid #a0a0a0; border-width: 1px 0 0 1px; }
.thumb { width: 2px; height: 17px; margin: 17px 7px 0 0; background: #858585; }
.data { height: 65px; border-bottom: 1px solid #fff; }
table { border-collapse: separate; border-spacing: 0; table-layout: fixed; }
td, th { padding: 0; font-weight: normal; white-space: nowrap; overflow: hidden; }
.dw, .mw { width: 222px; background: #fff; }
.dw td { height: 20px; border: 1px solid #c8c8c8; border-width: 0 1px 1px 0; padding: 0 4px 0 21px; text-align: right; line-height: 19px; }
.dw td:first-child { width: 119px; text-align: left; }
.dw td svg { margin: 2px 3px 0 -19px; float: left; }
.dw .alt { background: #f0f0f0; }
.mw th { width: 44px; height: 25px; padding-right: 5px; border-right: 1px solid #e2e2e2; text-align: right; font-size: 13px; }
.mw th:first-child { width: 88px; padding-left: 6px; text-align: left; }
.mw td { height: 20px; padding-right: 3px; border: 1px solid #c4c4c4; border-width: 0 1px 1px 0; background: #f0fff0; text-align: right; line-height: 19px; }
.mw td:first-child { text-align: left; }
.mw td svg { width: 8px; height: 8px; margin: 0 7px 0 6px; }
.mw .sel td { background: #e0f0ff; }
.mw .r { color: #f00; }
.mw .b { color: #00f; }
.mw .off { color: #a8a8a8; }

/* tab strips */
.tabs { display: flex; align-items: flex-start; height: 22px; padding-left: 3px; border-top: 1px solid #000; color: #757575; font-size: 11px; }
.tabs > button { position: relative; height: 19px; padding: 0 10px; line-height: 17px; }
.tabs > button + button:not(:nth-child(2))::before { content: ""; position: absolute; left: 0; top: 4px; height: 12px; border-left: 1px solid #757575; }
.tabs > .cur { height: 20px; margin-top: -1px; padding: 0 9px; border: 1px solid #000; border-top-color: #fff; background: #fff; color: #000; }
.tabs sub { color: #f00; font: bold 9px/9px "Open Sans", sans-serif; vertical-align: -3px; margin-left: 2px; }

/* navigator */
.tree { flex: 1; border: 1px solid #a0a0a0; border-width: 1px 0 0 1px; background: #fff; list-style: none; }
.tree li { position: relative; display: flex; align-items: center; height: 20px; gap: 6px; }
.tree .root { padding-left: 4px; }
.tree .lv1 { padding-left: 8px; }
.tree .lv2 { padding-left: 29px; }
.tree .lv1::before { content: ""; position: absolute; left: 12px; top: 0; height: 20px; border-left: 1px dotted #888; }
.tree .lv1:last-child::before { height: 10px; }
.tree .lv2::before { content: ""; position: absolute; left: 12px; top: 0; height: 20px; border-left: 1px dotted #888; }
.ex { position: relative; width: 9px; height: 9px; margin-right: 1px; border: 1px solid #999; background: #fff; color: #123f8f; font: 9px/7px "DejaVu Sans", sans-serif; text-align: center; }
.ex::after { content: ""; position: absolute; left: 9px; top: 3px; width: 5px; border-top: 1px dotted #888; }
.ex.none { border: 0; background: none; }
.ex.none::after { left: 5px; width: 10px; top: 4px; }
.tree .lv1 svg, .tree .lv2 svg { margin: 0 -1px 0 2px; }
.nav .tabs { height: 23px; }

/* chart window */
.work { flex: 1; display: flex; flex-direction: column; min-width: 0; margin-left: 1px; }
.mdi { flex: 1; display: flex; flex-direction: column; padding: 0 3px 6px 6px; border: 2px solid #6a6a6a; border-width: 2px 1px 1px 2px; }
.mdi-cap { display: flex; align-items: center; height: 28px; padding-left: 4px; color: #757575; }
.mdi-cap h2 { margin-left: 6px; }
.mdi-btns { display: flex; gap: 26px; margin: 3px 13px 0 auto; color: #b4b4b4; }
.mdi-btns svg { display: block; }
.chart { flex: 1; display: grid; grid-template-columns: 1fr 52px; grid-template-rows: 1fr 21px; padding: 2px 0 0 2px; border-top: 2px solid #6a6a6a; border-left: 1px solid #6a6a6a; background: #000; }
.chart svg { display: block; overflow: hidden; }
.plot { width: 100%; height: 100%; border: 1px solid #fff; shape-rendering: crispEdges; }
.price { width: 52px; height: 100%; padding-top: 1px; }
.time { width: 100%; height: 21px; }
.ctext { fill: #fff; font: 9px "DejaVu Sans Condensed", "Open Sans", sans-serif; }
.ctext .dark { fill: #000; }
.ctext .name { font-size: 10px; }
.charts { height: 20px; margin-top: 2px; padding-left: 2px; font-size: 12px; }
.charts > button { padding: 0 9px; line-height: 19px; }
.charts > .cur { height: 19px; margin-right: 2px; padding: 0 10px; }
.arrows { display: flex; gap: 17px; margin: 6px 12px 0 auto; }

/* toolbox */
.dock { display: flex; min-height: 158px; padding: 4px 3px 3px 1px; border-top: 1px solid #a0a0a0; border-bottom: 1px solid #a0a0a0; }
.spine { display: flex; flex-direction: column; width: 15px; }
.spine h2 { flex: 1; width: 13px; min-height: 0; background: linear-gradient(#bccadb, #dce8f3); writing-mode: vertical-rl; text-orientation: sideways; transform: rotate(180deg); font-size: 10px; line-height: 13px; white-space: nowrap; }
.dock-body { flex: 1; display: flex; flex-direction: column; min-width: 0; border-top: 1px solid #a0a0a0; border-left: 1px solid #a0a0a0; background: #fff; }
.trades { width: 100%; margin-bottom: auto; }
.c1 { width: 183px; } .c2 { width: 127px; } .c3 { width: 140px; } .c4 { width: 141px; }
.trades th { height: 23px; padding: 0 5px 3px; border-right: 1px solid #e2e2e2; font-size: 13px; text-align: right; }
.trades .kt { font-size: 12px; }
.trades td { height: 20px; padding: 0 3px; border-right: 1px solid #c8c8c8; text-align: right; }
.trades th:nth-child(-n+2), .trades td:nth-child(-n+2) { text-align: left; }
.trades td:first-child { padding-left: 3px; }
.trades td:last-child { border-right: 0; padding-right: 6px; text-align: right; }
.trades td button { margin-left: 9px; color: #9a9a9a; }
.sort { margin: 0 0 4px 19px; }
.doc { margin-right: 7px; vertical-align: middle; }
.loss { color: #f00; }
.sum { background: #c8c8c8; }
.trades .sum td { height: 20px; border: 0; line-height: 18px; }
.sum td:first-child { font-size: 13px; }
.trades .sum td:last-child { padding-right: 23px; }
.low { width: 100%; padding-left: 1px; background: #f0f0f0; }
.links { display: flex; gap: 13px; margin: 4px 9px 0 auto; color: #111; }
.links button { display: flex; align-items: center; gap: 4px; height: 16px; }
.links .dim { color: #a8a8a8; }
.links .lat { font-size: 12px; }
.tester { min-height: 38px; border-top: 0; padding-bottom: 2px; }
.tester .dock-body { padding-top: 7px; }

/* status bar */
.status { display: flex; height: 23px; padding-top: 4px; line-height: 18px; }
.status span { height: 18px; padding-left: 5px; border-left: 1px solid #a0a0a0; }
.status .hint { flex: 1; padding-left: 2px; border: 0; font-size: 11px; }
.s1 { width: 128px; } .s2 { width: 98px; } .s3 { width: 69px; }
.status .ping { display: flex; align-items: center; gap: 6px; width: 121px; }

/* order dialog */
.dialog { position: absolute; left: 504px; top: 421px; width: 776px; height: 389px; border-radius: 8px; background: #f0f0f0; box-shadow: 0 0 0 1px #444, 0 4px 16px rgba(0,0,0,.3); }
.dlg-cap { display: flex; align-items: center; height: 31px; padding-left: 8px; border-radius: 8px 8px 0 0; background: #fff; font-size: 11px; }
.dlg-cap button:disabled { color: #c4c4c4; }
.dlg-body { display: flex; gap: 16px; padding: 10px 20px 0 8px; font: 11px/16px "DejaVu Sans Condensed", "Noto Sans CJK JP", sans-serif; font-feature-settings: "palt"; }
.tick { width: 308px; height: 332px; border: 2px solid #fff; border-top-color: #858585; border-left-color: #858585; background: #fff; font-size: 9px; shape-rendering: crispEdges; }
.tag { fill: #fff; }
.form { flex: 1; display: flex; flex-direction: column; gap: 8px; padding-right: 5px; }
.frow { display: grid; grid-template-columns: 88px 1fr; gap: 8px; align-items: center; height: 21px; }
.frow label { text-align: right; }
.spins { display: flex; height: 17px; margin-top: 19px; }
.spins + .spins { margin-top: 4px; }
.spins label { width: 89px; }
.pick { position: relative; height: 21px; }
.pick select { display: block; width: 100%; height: 21px; padding: 0 0 0 2px; appearance: none; border: 1px solid #858585; border-radius: 0; background: #fafafa; }
.pick svg { position: absolute; right: 4px; top: 8px; }
.mark { outline: 4px solid #ff0008; }
.mark select { border-color: #fafafa; }
.spin { display: flex; width: 103px; height: 17px; background: #fff; }
.spin input { flex: 1; min-width: 0; padding: 0 4px 0 0; border: 0; border-right: 1px solid #d8d8d8; background: none; text-align: right; }
.spin.pts { width: 82px; height: 19px; margin-left: 38px; background: #f0f0f0; }
.pts input { background: #fff; border-bottom: 1px solid #858585; }
.ud { display: grid; width: 15px; margin-left: 1px; }
.ud button { display: grid; place-items: center; border: 1px solid #b0b0b0; background: #f0f0f0; }
.ud button::before { content: ""; border: 3px solid transparent; border-top: 0; border-bottom: 3px solid #111; }
.ud button + button::before { border-bottom: 0; border-top: 3px solid #111; }
.quote { height: 32px; margin: 18px 0 15px 6px; font-size: 26px; line-height: 32px; text-align: center; color: #111; }
.quote small { font-size: 20px; }
.modify { height: 22px; margin-left: 6px; border: 1px solid #7b98d8; background: linear-gradient(#b6caf3, #8ea8de); outline: 4px solid #ff0008; outline-offset: 2px; }
.note { margin-left: 6px; text-align: center; line-height: 13px; white-space: nowrap; }
.badge { position: absolute; width: 41px; height: 41px; border-radius: 50%; background: #ff0008; color: #fff; font-size: 27px; line-height: 39px; text-align: center; }
.n32 { left: 767px; top: 61px; }
.n33 { left: 544px; top: 98px; }
.n34 { left: 543px; top: 141px; }
.n35 { left: 767px; top: 235px; }
.pointer { position: absolute; left: 732px; top: 251px; }
```
